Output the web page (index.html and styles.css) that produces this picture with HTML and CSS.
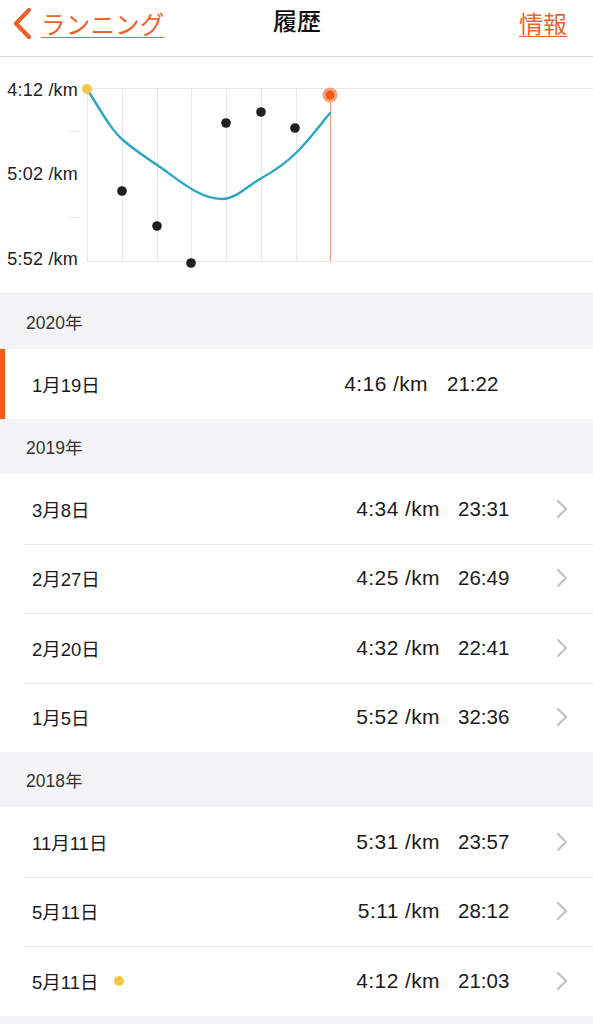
FILE: index.html
```html
<!DOCTYPE html>
<html lang="ja">
<head>
<meta charset="utf-8">
<title>履歴</title>
<link rel="stylesheet" href="styles.css">
</head>
<body>
<div class="app">
  <header class="nav">
    <a class="nav-back">
      <svg class="back-icon" width="22" height="34" viewBox="0 0 22 34"><path d="M17 3 L4 16.5 L17 30" fill="none" stroke="#e8622a" stroke-width="4.2" stroke-linecap="round" stroke-linejoin="round"/></svg>
      <span class="link">ランニング</span>
    </a>
    <h1 class="nav-title">履歴</h1>
    <a class="nav-info link">情報</a>
  </header>

  <section class="chart">
    <svg width="593" height="236" viewBox="0 0 593 236">
      <g stroke="#e7e7ea" stroke-width="1">
        <line x1="87" y1="31.5" x2="593" y2="31.5"/>
        <line x1="87" y1="204.5" x2="593" y2="204.5"/>
        <line x1="87.5" y1="31" x2="87.5" y2="204"/>
        <line x1="122.5" y1="31" x2="122.5" y2="204"/>
        <line x1="157.5" y1="31" x2="157.5" y2="204"/>
        <line x1="191.5" y1="31" x2="191.5" y2="204"/>
        <line x1="226.5" y1="31" x2="226.5" y2="204"/>
        <line x1="261.5" y1="31" x2="261.5" y2="204"/>
        <line x1="296.5" y1="31" x2="296.5" y2="204"/>
        <line x1="68" y1="74.5" x2="79" y2="74.5"/>
        <line x1="68" y1="160.5" x2="79" y2="160.5"/>
      </g>
      <g class="axis-label" text-anchor="end">
        <text x="78" y="39">4:12 /km</text>
        <text x="78" y="123">5:02 /km</text>
        <text x="78" y="208">5:52 /km</text>
      </g>
      <line x1="330.5" y1="38" x2="330.5" y2="204" stroke="#ef9a78" stroke-width="1.2"/>
      <path d="M87,32 C100,52 110,72 124,84 C136,94 148,102 160,110 C180,124 200,142 222,142 C236,142 246,130 260,122 C276,113 288,104 296,96 C310,82 320,68 330,56" fill="none" stroke="#2ba6c8" stroke-width="2.4" stroke-linecap="round"/>
      <g fill="#1f1f1f">
        <circle cx="122" cy="134" r="4.8"/>
        <circle cx="157" cy="169" r="4.8"/>
        <circle cx="191" cy="206" r="4.8"/>
        <circle cx="226" cy="66" r="4.8"/>
        <circle cx="261" cy="55" r="4.8"/>
        <circle cx="295" cy="71" r="4.8"/>
      </g>
      <circle cx="330" cy="38" r="7.5" fill="#f6a384"/>
      <circle cx="330" cy="38" r="4.5" fill="#f55a14"/>
      <circle cx="87" cy="32" r="5" fill="#f7c744"/>
    </svg>
  </section>

  <section class="group">
    <div class="group-head">2020年</div>
    <div class="row row-current">
      <span class="date">1月19日</span>
      <span class="pace">4:16 /km</span>
      <span class="time">21:22</span>
    </div>
  </section>

  <section class="group">
    <div class="group-head">2019年</div>
    <div class="row">
      <span class="date">3月8日</span>
      <span class="pace">4:34 /km</span>
      <span class="time">23:31</span>
      <svg class="chev" width="14" height="20" viewBox="0 0 14 20"><path d="M3 2 L11 10 L3 18" fill="none" stroke="#c4c4c8" stroke-width="2.4" stroke-linecap="round" stroke-linejoin="round"/></svg>
    </div>
    <div class="row">
      <span class="date">2月27日</span>
      <span class="pace">4:25 /km</span>
      <span class="time">26:49</span>
      <svg class="chev" width="14" height="20" viewBox="0 0 14 20"><path d="M3 2 L11 10 L3 18" fill="none" stroke="#c4c4c8" stroke-width="2.4" stroke-linecap="round" stroke-linejoin="round"/></svg>
    </div>
    <div class="row">
      <span class="date">2月20日</span>
      <span class="pace">4:32 /km</span>
      <span class="time">22:41</span>
      <svg class="chev" width="14" height="20" viewBox="0 0 14 20"><path d="M3 2 L11 10 L3 18" fill="none" stroke="#c4c4c8" stroke-width="2.4" stroke-linecap="round" stroke-linejoin="round"/></svg>
    </div>
    <div class="row">
      <span class="date">1月5日</span>
      <span class="pace">5:52 /km</span>
      <span class="time">32:36</span>
      <svg class="chev" width="14" height="20" viewBox="0 0 14 20"><path d="M3 2 L11 10 L3 18" fill="none" stroke="#c4c4c8" stroke-width="2.4" stroke-linecap="round" stroke-linejoin="round"/></svg>
    </div>
  </section>

  <section class="group">
    <div class="group-head">2018年</div>
    <div class="row">
      <span class="date">11月11日</span>
      <span class="pace">5:31 /km</span>
      <span class="time">23:57</span>
      <svg class="chev" width="14" height="20" viewBox="0 0 14 20"><path d="M3 2 L11 10 L3 18" fill="none" stroke="#c4c4c8" stroke-width="2.4" stroke-linecap="round" stroke-linejoin="round"/></svg>
    </div>
    <div class="row">
      <span class="date">5月11日</span>
      <span class="pace">5:11 /km</span>
      <span class="time">28:12</span>
      <svg class="chev" width="14" height="20" viewBox="0 0 14 20"><path d="M3 2 L11 10 L3 18" fill="none" stroke="#c4c4c8" stroke-width="2.4" stroke-linecap="round" stroke-linejoin="round"/></svg>
    </div>
    <div class="row">
      <span class="date">5月11日<i class="best-dot"></i></span>
      <span class="pace">4:12 /km</span>
      <span class="time">21:03</span>
      <svg class="chev" width="14" height="20" viewBox="0 0 14 20"><path d="M3 2 L11 10 L3 18" fill="none" stroke="#c4c4c8" stroke-width="2.4" stroke-linecap="round" stroke-linejoin="round"/></svg>
    </div>
  </section>
  <div class="tail"></div>
</div>
</body>
</html>
```

FILE: styles.css
```css
* { box-sizing: border-box; }
html, body { margin: 0; padding: 0; background: #f4f4f7; }
body {
  width: 593px;
  font-family: "Liberation Sans", "Noto Sans CJK JP", sans-serif;
  color: #1a1a1a;
}
.app { background: #f4f4f7; }

.nav {
  height: 57px;
  background: #fff;
  border-bottom: 1px solid #dcdcdf;
  display: flex;
  align-items: center;
  justify-content: space-between;
  padding: 0 26px 0 12px;
  position: relative;
}
.nav-back {
  display: flex;
  align-items: center;
  gap: 7px;
  margin-top: -8px;
}
.link {
  font-family: "Noto Sans CJK JP", sans-serif;
  font-size: 24.5px;
  color: #e8652e;
  text-decoration: underline;
  text-decoration-thickness: 1px;
  text-underline-offset: 3px;
  line-height: 1;
}
.nav-back .link { letter-spacing: 0.2px; }
.nav-title {
  font-family: "Noto Sans CJK JP", sans-serif;
  font-size: 24px;
  font-weight: 500;
  margin: 0;
  line-height: 1;
  position: absolute;
  left: 273px;
  top: 8px;
  color: #111;
}
.nav-info { margin-top: -10px; font-size: 24px; }

.chart {
  background: #fff;
  height: 237px;
  border-bottom: 1px solid #e8e8ec;
}
.chart svg { display: block; }
.axis-label text {
  font-family: "Liberation Sans", sans-serif;
  font-size: 18px;
  letter-spacing: 0.2px;
  fill: #222;
}

.group-head {
  height: 55px;
  display: flex;
  align-items: center;
  padding-left: 26px;
  font-family: "Liberation Sans", "Noto Sans CJK JP", sans-serif;
  font-size: 17.5px;
  color: #333;
  background: #f4f4f7;
}

.row {
  height: 69.5px;
  background: #fff;
  display: flex;
  align-items: center;
  padding-left: 32px;
  position: relative;
}
.row + .row::before {
  content: "";
  position: absolute;
  left: 24px;
  right: 0;
  top: 0;
  height: 1px;
  background: #e6e6ea;
}
.row-current {
  height: 70px;
  border-left: 5px solid #f25b1c;
  padding-left: 27px;
}
.date {
  font-size: 18.5px;
  flex: 1;
  display: flex;
  align-items: center;
}
.pace {
  font-size: 21px;
  letter-spacing: 0.4px;
  text-align: right;
  margin-right: 18px;
}
.time {
  font-size: 20.5px;
  width: 97px;
}
.chev { margin-right: 24px; flex: none; }

.row-current .pace { margin-right: 19px; }
.row-current .time { width: 97px; margin-right: 49px; }

.best-dot {
  display: inline-block;
  width: 10px;
  height: 10px;
  border-radius: 50%;
  background: #f7c744;
  margin-left: 15px;
}
.tail { height: 10px; background: #f4f4f7; }
```
